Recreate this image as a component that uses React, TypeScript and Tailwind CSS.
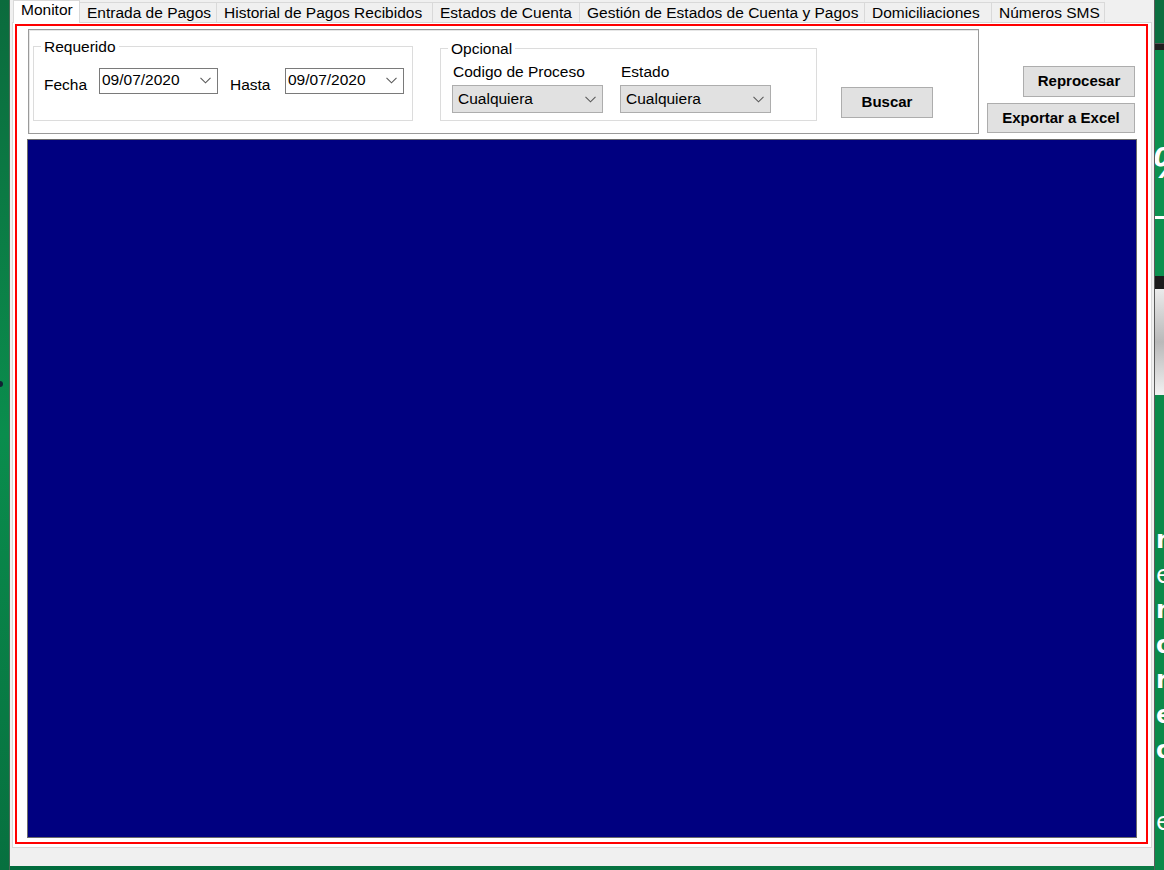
import React from "react";

const tabs = [
  { label: "Monitor", w: 67 },
  { label: "Entrada de Pagos", w: 137 },
  { label: "Historial de Pagos Recibidos", w: 216 },
  { label: "Estados de Cuenta", w: 147 },
  { label: "Gestión de Estados de Cuenta y Pagos", w: 285 },
  { label: "Domiciliaciones", w: 127 },
  { label: "Números SMS", w: 113 },
];

function Chevron() {
  return (
    <svg width="11" height="7" viewBox="0 0 11 7" className="shrink-0">
      <path d="M0.5 0.8 L5.5 5.8 L10.5 0.8" fill="none" stroke="#5a5a5a" strokeWidth="1.1" />
    </svg>
  );
}

function DateBox({ value }: { value: string }) {
  return (
    <div className="w-[119px] h-[26px] bg-white border border-[#7a7a7a] flex items-center justify-between pl-[2px] pr-[6px] pb-[2px]">
      <span className="leading-[18px]">{value}</span>
      <Chevron />
    </div>
  );
}

function Combo({ label }: { label: string }) {
  return (
    <div className="w-[151px] flex flex-col">
      <span className="leading-[18px] pl-[1px]">{label}</span>
      <div className="mt-[4px] h-[28px] bg-[#e1e1e1] border border-[#adadad] flex items-center justify-between pl-[5px] pr-[6px]">
        <span className="leading-[18px]">Cualquiera</span>
        <Chevron />
      </div>
    </div>
  );
}

function Btn({ label, cls }: { label: string; cls: string }) {
  return (
    <div className={"bg-[#e1e1e1] border border-[#adadad] flex items-center justify-center font-bold text-[15px] " + cls}>
      {label}
    </div>
  );
}

export default function App() {
  return (
    <div className="w-[1164px] h-[870px] flex overflow-hidden font-['Liberation_Sans',Arial,sans-serif] text-[15.5px] text-black">
      {/* left background strip */}
      <div className="w-[10px] h-full bg-gradient-to-b from-[#0b6b3d] via-[#0a8d4d] to-[#07703f] border-r border-[#4b6b57] flex flex-col">
        <div className="mt-[381px] w-[3px] h-[6px] rounded-r-full bg-[#123]" />
      </div>

      {/* main window column */}
      <div className="w-[1144px] h-full flex flex-col">
        <div className="h-[866px] bg-[#f0f0f0] flex flex-col">
          {/* tab strip */}
          <div className="h-[22px] flex items-end pl-[3px]">
            {tabs.map((t, i) =>
              i === 0 ? (
                <div
                  key={t.label}
                  style={{ width: t.w }}
                  className="relative z-10 h-[23px] -mb-px bg-white border border-b-0 border-[#d9d9d9] pl-[7px] pt-[1px] leading-[16px] whitespace-nowrap"
                >
                  {t.label}
                </div>
              ) : (
                <div
                  key={t.label}
                  style={{ width: t.w }}
                  className="h-[20px] bg-[#f0f0f0] border border-b-0 border-l-0 border-[#d9d9d9] pl-[7px] leading-[19px] whitespace-nowrap"
                >
                  {t.label}
                </div>
              )
            )}
          </div>

          {/* tab page */}
          <div className="ml-[2px] w-[1140px] h-[826px] bg-white border border-[#d9d9d9]">
            <div className="ml-[2px] mt-[1px] w-[1133px] h-[820px] border-2 border-[#ff0000] flex flex-col pt-[3px] pl-[10px] pr-[9px] pb-[4px]">
              {/* filter row */}
              <div className="h-[105px] flex shrink-0">
                <div className="ml-[1px] w-[951px] h-[105px] border border-[#9a9a9a] shadow-[inset_1px_1px_0_#e6e6e6] bg-white flex items-start pl-[4px]">
                  {/* Requerido */}
                  <div className="relative mt-[16px] w-[380px] h-[75px] border border-[#dcdcdc]">
                    <span className="absolute -top-[9px] left-[7px] bg-white px-[3px] leading-[18px]">Requerido</span>
                    <div className="flex items-start pl-[10px] pt-[21px]">
                      <span className="w-[55px] mt-[8px] leading-[18px]">Fecha</span>
                      <DateBox value="09/07/2020" />
                      <span className="ml-[12px] w-[55px] mt-[8px] leading-[18px]">Hasta</span>
                      <DateBox value="09/07/2020" />
                    </div>
                  </div>

                  {/* Opcional */}
                  <div className="relative ml-[27px] mt-[18px] w-[377px] h-[73px] border border-[#dcdcdc]">
                    <span className="absolute -top-[9px] left-[7px] bg-white px-[3px] leading-[18px]">Opcional</span>
                    <div className="flex pl-[11px] pt-[14px] gap-[17px]">
                      <Combo label="Codigo de Proceso" />
                      <Combo label="Estado" />
                    </div>
                  </div>

                  <Btn label="Buscar" cls="ml-[24px] mt-[57px] w-[92px] h-[31px]" />
                </div>

                <div className="flex-1 flex flex-col items-end pr-[2px]">
                  <Btn label="Reprocesar" cls="mt-[37px] w-[112px] h-[31px]" />
                  <Btn label="Exportar a Excel" cls="mt-[6px] w-[148px] h-[30px]" />
                </div>
              </div>

              {/* results grid area */}
              <div className="mt-[5px] flex-1 bg-[#000080] border border-[#6b6b6b]" />
            </div>
          </div>
        </div>
        <div className="flex-1 bg-gradient-to-r from-[#006b3c] to-[#0b7a45]" />
      </div>

      {/* right background strip */}
      <div className="w-[10px] h-full flex flex-col overflow-hidden border-l border-[#5a5a5a]">
        <div className="h-[43px] bg-[#0c6f40]" />
        <div className="h-[7px] bg-[#1f1f1f] border-t border-[#555]" />
        <div className="h-[226px] bg-[#0d914f] flex flex-col text-white font-bold">
          <span className="mt-[86px] -ml-[3px] text-[44px] leading-[54px] italic">%</span>
          <div className="mt-[26px] w-[10px] h-[3px] bg-white" />
        </div>
        <div className="h-[13px] bg-[#1c1c1c]" />
        <div className="h-[106px] bg-gradient-to-b from-[#ebebeb] via-[#b9b9b9] to-[#f2f2f2]" />
        <div className="flex-1 bg-[#0b8a4a] flex flex-col pt-[128px] pl-[1px] text-white font-bold text-[24px] leading-[35px] font-['DejaVu_Sans',sans-serif]">
          <span>n</span>
          <span className="font-normal">e</span>
          <span>n</span>
          <span>o</span>
          <span>r</span>
          <span>e</span>
          <span>o</span>
          <span className="mt-[37px] font-normal">e</span>
        </div>
      </div>
    </div>
  );
}
